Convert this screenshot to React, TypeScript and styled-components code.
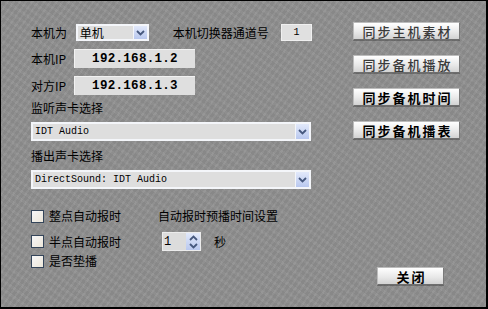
import styled, { createGlobalStyle } from 'styled-components'

const GlobalStyle = createGlobalStyle`
  html, body {
    margin: 0;
    padding: 0;
    background: #000;
  }
  * {
    box-sizing: border-box;
  }
`

const cjk = `'Noto Sans CJK SC', 'DejaVu Sans', sans-serif`
const mono = `'Liberation Mono', 'DejaVu Sans Mono', monospace`

const Window = styled.div`
  width: 488px;
  height: 309px;
  border-top: 1px solid #000;
  border-left: 1px solid #000;
  border-right: 2px solid #000;
  border-bottom: 2px solid #000;
  background-color: #8f8f8f;
  background-image: repeating-linear-gradient(
      125deg,
      rgba(255, 255, 255, 0.035) 0 2px,
      rgba(0, 0, 0, 0.03) 2px 5px
    ),
    repeating-linear-gradient(35deg, rgba(255, 255, 255, 0.03) 0 3px, rgba(0, 0, 0, 0.025) 3px 7px);
  padding: 22px 0 0 30px;
  font-family: ${cjk};
  font-size: 12px;
  color: #000;
  display: flex;
  flex-direction: column;
`

const Top = styled.div`
  display: flex;
`

const LeftCol = styled.div`
  width: 281px;
  display: flex;
  flex-direction: column;
`

const RightCol = styled.div`
  margin-left: 41px;
  margin-top: -1px;
  display: flex;
  flex-direction: column;
  gap: 15px;
`

const Row = styled.div<{ $mt?: number; $h?: number }>`
  display: flex;
  align-items: center;
  height: ${({ $h }) => $h ?? 17}px;
  margin-top: ${({ $mt }) => $mt ?? 0}px;
`

const Label = styled.span<{ $w?: number; $mt?: number }>`
  display: inline-block;
  line-height: 14px;
  white-space: nowrap;
  width: ${({ $w }) => ($w ? `${$w}px` : 'auto')};
  margin-top: ${({ $mt }) => $mt ?? 0}px;
`

const SelectBox = styled.div<{ $w: number; $h?: number }>`
  width: ${({ $w }) => $w}px;
  height: ${({ $h }) => $h ?? 17}px;
  border: 2px solid #f4f6fa;
  background: #dedede;
  display: flex;
  align-items: center;
  flex-shrink: 0;
`

const SelectText = styled.span<{ $mono?: boolean }>`
  flex: 1;
  padding-left: 2px;
  font-family: ${({ $mono }) => ($mono ? mono : cjk)};
  font-size: ${({ $mono }) => ($mono ? '10px' : '12px')};
  line-height: 14px;
  white-space: nowrap;
`

const ArrowBtn = styled.div`
  width: 14px;
  height: 100%;
  background: linear-gradient(#e2e9fa, #b9c8ef);
  border-left: 1px solid #f4f6fa;
  display: flex;
  align-items: center;
  justify-content: center;
`

const InfoBox = styled.div<{ $w: number }>`
  width: ${({ $w }) => $w}px;
  height: 19px;
  background: #dfdfdf;
  border-top: 1px solid #f2f2f2;
  border-left: 1px solid #f2f2f2;
  display: flex;
  align-items: center;
  justify-content: center;
  font-family: ${mono};
  font-weight: bold;
  font-size: 12.5px;
  letter-spacing: 0.3px;
  flex-shrink: 0;
`

const SmallBox = styled.div`
  width: 32px;
  height: 17px;
  margin-left: 12px;
  background: #e0e0e0;
  border: 1px solid #f0f0f0;
  display: flex;
  align-items: center;
  justify-content: center;
  font-family: ${mono};
  font-size: 10px;
`

const Button = styled.div<{ $w: number; $strong?: boolean }>`
  width: ${({ $w }) => $w}px;
  height: 18px;
  background: linear-gradient(#ffffff, #e9e9e9 55%, #d2d2d2);
  border: 1px solid #bcbcbc;
  border-bottom-color: #6e6e6e;
  border-right-color: #7a7a7a;
  box-shadow: 0 1px 0 rgba(0, 0, 0, 0.25);
  display: flex;
  align-items: center;
  justify-content: center;
  font-size: 13px;
  letter-spacing: 2px;
  padding-left: 2px;
  color: ${({ $strong }) => ($strong ? '#000' : '#3a3a3a')};
  font-weight: ${({ $strong }) => ($strong ? 700 : 500)};
  white-space: nowrap;
`

const Bottom = styled.div`
  display: flex;
  margin-top: 20px;
`

const Checks = styled.div`
  display: flex;
  flex-direction: column;
`

const CheckRow = styled.div<{ $mt?: number; $h?: number }>`
  display: flex;
  align-items: center;
  height: ${({ $h }) => $h ?? 14}px;
  margin-top: ${({ $mt }) => $mt ?? 0}px;
`

const CheckItem = styled.label<{ $w: number }>`
  display: flex;
  align-items: center;
  gap: 5px;
  width: ${({ $w }) => $w}px;
  line-height: 14px;
`

const Box = styled.span`
  width: 13px;
  height: 13px;
  border: 1px solid #34455a;
  background: linear-gradient(135deg, #f6f6f8, #ece6d8);
  flex-shrink: 0;
`

const Spin = styled.div`
  width: 39px;
  height: 19px;
  background: #dcdcdc;
  border: 1px solid #ececec;
  display: flex;
  align-items: center;
`

const SpinText = styled.span`
  flex: 1;
  padding-left: 1px;
  font-family: ${mono};
  font-size: 12px;
`

const SpinBtn = styled.div`
  width: 14px;
  height: 100%;
  background: linear-gradient(#e2e9fa, #b9c8ef);
  display: flex;
  flex-direction: column;
  align-items: center;
  justify-content: center;
  gap: 2px;
`

const CloseArea = styled.div`
  margin-left: auto;
  margin-right: 42px;
  padding-top: 58px;
`

function Chevron({ up }: { up?: boolean }) {
  return (
    <svg width="9" height="6" viewBox="0 0 9 6">
      <polyline
        points={up ? '1,5 4.5,1.5 8,5' : '1,1 4.5,4.5 8,1'}
        fill="none"
        stroke="#46587e"
        strokeWidth="1.8"
      />
    </svg>
  )
}

function Select({ w, h, text, isMono }: { w: number; h?: number; text: string; isMono?: boolean }) {
  return (
    <SelectBox $w={w} $h={h}>
      <SelectText $mono={isMono}>{text}</SelectText>
      <ArrowBtn>
        <Chevron />
      </ArrowBtn>
    </SelectBox>
  )
}

export default function App() {
  const syncButtons = [
    { title: '同步主机素材', strong: false },
    { title: '同步备机播放', strong: false },
    { title: '同步备机时间', strong: true },
    { title: '同步备机播表', strong: true },
  ]

  return (
    <>
      <GlobalStyle />
      <Window>
        <Top>
          <LeftCol>
            <Row $mt={1}>
              <Label $w={46}>本机为</Label>
              <Select w={73} text="单机" />
              <Label style={{ marginLeft: 24 }}>本机切换器通道号</Label>
              <SmallBox>1</SmallBox>
            </Row>
            <Row $mt={8} $h={19}>
              <Label $w={43}>本机IP</Label>
              <InfoBox $w={121}>192.168.1.2</InfoBox>
            </Row>
            <Row $mt={8} $h={19}>
              <Label $w={43}>对方IP</Label>
              <InfoBox $w={121}>192.168.1.3</InfoBox>
            </Row>
            <Label $mt={6}>监听声卡选择</Label>
            <div style={{ marginTop: 7 }}>
              <Select w={280} h={19} text="IDT Audio" isMono />
            </div>
            <Label $mt={8}>播出声卡选择</Label>
            <div style={{ marginTop: 7 }}>
              <Select w={280} h={19} text="DirectSound: IDT Audio" isMono />
            </div>
          </LeftCol>
          <RightCol>
            {syncButtons.map((b) => (
              <Button key={b.title} $w={107} $strong={b.strong}>
                {b.title}
              </Button>
            ))}
          </RightCol>
        </Top>
        <Bottom>
          <Checks>
            <CheckRow>
              <CheckItem $w={127}>
                <Box />
                整点自动报时
              </CheckItem>
              <Label>自动报时预播时间设置</Label>
            </CheckRow>
            <CheckRow $mt={9} $h={19}>
              <CheckItem $w={131}>
                <Box />
                半点自动报时
              </CheckItem>
              <Spin>
                <SpinText>1</SpinText>
                <SpinBtn>
                  <Chevron up />
                  <Chevron />
                </SpinBtn>
              </Spin>
              <Label style={{ marginLeft: 13 }}>秒</Label>
            </CheckRow>
            <CheckRow $mt={3}>
              <CheckItem $w={127}>
                <Box />
                是否垫播
              </CheckItem>
            </CheckRow>
          </Checks>
          <CloseArea>
            <Button $w={67} $strong>
              关闭
            </Button>
          </CloseArea>
        </Bottom>
      </Window>
    </>
  )
}
